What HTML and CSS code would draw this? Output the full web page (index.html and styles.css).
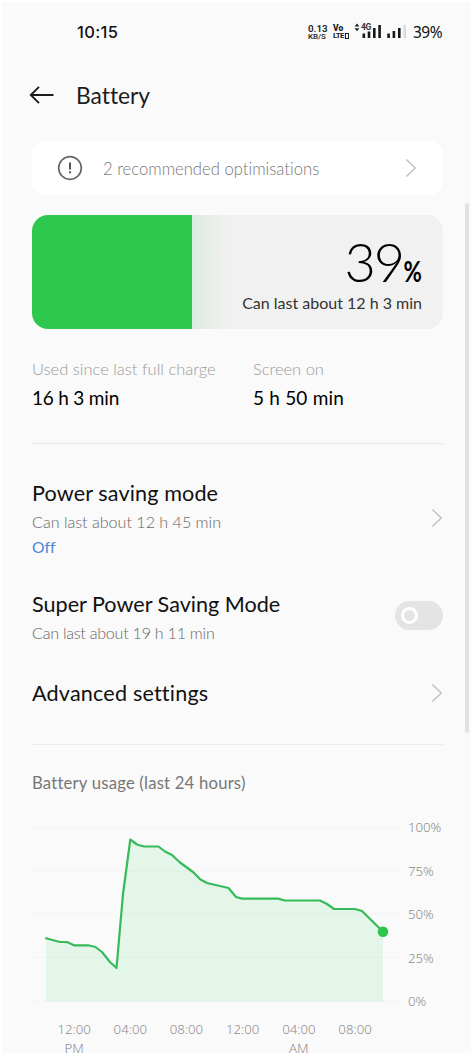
FILE: index.html
```html
<!DOCTYPE html>
<html lang="en">
<head>
<meta charset="utf-8">
<title>Battery</title>
<link rel="stylesheet" href="styles.css">
</head>
<body>
<div class="screen">
  <div class="status">
    <span class="clock">10:15</span>
    <div class="status-right">
      <span class="speed"><b>0.13</b><i>KB/S</i></span>
      <span class="volte"><b>Vo</b><i>LTE<em></em></i></span>
      <span class="net"><svg width="6" height="9" viewBox="0 0 6 9"><path d="M.6 3.600 3 .6 5.400 3.600zM.6 5.200 3 8.200 5.400 5.200z" fill="#222"/></svg>4G</span>
      <svg class="signals" width="46" height="20" viewBox="0 0 46 20">
        <path d="M.5 11.500h2.600v4.500H.5zM5.700 9.500h2.600v6.500H5.700zM11 6h2.600v10H11zM16.300 3h2.600v13h-2.600z" fill="#181818"/>
        <path d="M25.300 11.500h2.600v4.500h-2.600zM30.600 9h2.600v7h-2.600zM36 6h2.600v10H36z" fill="#181818"/>
        <path d="M41.500 3h2.500v13h-2.500z" fill="#d9d9d9"/>
      </svg>
      <span class="level">39%</span>
    </div>
  </div>

  <header class="header">
    <svg class="back" width="26" height="20" viewBox="0 0 26 20"><path d="M24.500 10H2M10 1.800 1.800 10 10 18.200" fill="none" stroke="#1c1c1c" stroke-width="1.900"/></svg>
    <h1 class="title">Battery</h1>
  </header>

  <main class="content">
    <div class="tip">
      <svg width="26" height="26" viewBox="0 0 26 26"><circle cx="13" cy="13" r="11.300" fill="none" stroke="#666" stroke-width="1.700"/><path d="M13 7.500v7M13 16.200v2" stroke="#444" stroke-width="1.800"/></svg>
      <span class="tip-text">2 recommended optimisations</span>
      <svg class="chev" width="12" height="20" viewBox="0 0 12 20"><path d="M1.300 1.500 10.300 10 1.300 18.500"/></svg>
    </div>

    <section class="gauge">
      <div class="gauge-fill"></div>
      <div class="gauge-fade"></div>
      <div class="gauge-text">
        <div class="big"><span class="num">39</span><span class="pct">%</span></div>
        <div class="remain">Can last about 12 h 3 min</div>
      </div>
    </section>

    <section class="stats">
      <div><div class="stat-label">Used since last full charge</div><div class="stat-value v1">16 h 3 min</div></div>
      <div><div class="stat-label">Screen on</div><div class="stat-value v2">5 h 50 min</div></div>
    </section>

    <section class="settings">
      <div class="row power">
        <div><div class="name n1">Power saving mode</div><div class="sub">Can last about 12 h 45 min</div><div class="off">Off</div></div>
        <svg class="chev" width="12" height="20" viewBox="0 0 12 20"><path d="M1.300 1.500 10.300 10 1.300 18.500"/></svg>
      </div>
      <div class="row super">
        <div><div class="name">Super Power Saving Mode</div><div class="sub s2">Can last about 19 h 11 min</div></div>
        <div class="toggle"><div class="knob"></div></div>
      </div>
      <div class="row advanced">
        <div class="name n3">Advanced settings</div>
        <svg class="chev" width="12" height="20" viewBox="0 0 12 20"><path d="M1.300 1.500 10.300 10 1.300 18.500"/></svg>
      </div>
    </section>

    <section class="usage">
      <h2 class="usage-title">Battery usage (last 24 hours)</h2>
      <div class="plot">
        <svg width="367" height="184" viewBox="32 823 367 184">
          <path d="M46 938.300 60 942H67L74 945.300H88L95.500 947 102 952 110 962 116.500 968 123 894 130.300 839.500 137 844.500 144 846.500H158.500L165 851.500 172 855 180 862.500 193 872 200.500 879.500 207 883 228.500 888 236 897 242 898.600H278L285 900.500H320L327 904 334 909H355L362 911 383 931.700V1001.500H46z" fill="#e4f5e9"/>
          <path d="M32 827.500H399M32 871H399M32 914H399M32 957.500H399M32 1001H399" stroke="#000" stroke-opacity=".025"/>
          <path d="M46 938.300 60 942H67L74 945.300H88L95.500 947 102 952 110 962 116.500 968 123 894 130.300 839.500 137 844.500 144 846.500H158.500L165 851.500 172 855 180 862.500 193 872 200.500 879.500 207 883 228.500 888 236 897 242 898.600H278L285 900.500H320L327 904 334 909H355L362 911 383 931.700" fill="none" stroke="#36bb59" stroke-width="2.200" stroke-linejoin="round" stroke-linecap="round"/>
          <circle cx="383" cy="931.700" r="5.300" fill="#2fc54d"/>
        </svg>
        <div class="y-axis"><span>100%</span><span>75%</span><span>50%</span><span>25%</span><span>0%</span></div>
      </div>
      <div class="x-axis"><span>12:00<br>PM</span><span>04:00</span><span>08:00</span><span>12:00</span><span>04:00<br>AM</span><span>08:00</span></div>
    </section>
  </main>
  <div class="scrollbar"></div>
</div>
</body>
</html>
```
FILE: styles.css
```css
* { box-sizing: border-box; }
body { margin: 0; background: #fff; font-family: Lato, "Noto Sans", sans-serif; color: #111; font-variant-ligatures: none; }
.screen { position: relative; width: 474px; height: 1053px; overflow: hidden; background: #fafafa; border: solid #fff; border-width: 2px 3px 0 2px; white-space: nowrap; }
.status { display: flex; justify-content: space-between; align-items: center; height: 60px; padding: 0 29px 0 75px; }
.clock { font: 500 16.500px/20px Inter, sans-serif; letter-spacing: .35px; }
.status-right { display: flex; align-items: center; }
.speed, .volte { display: flex; flex-direction: column; font: 700 9px/8px Roboto, sans-serif; color: #222; }
.speed { width: 25px; }
.speed b { font-size: 9.800px; line-height: 9px; font-weight: 600; }
.speed i { font-style: normal; font-weight: 500; font-size: 8px; line-height: 8px; letter-spacing: -.1px; }
.volte { width: 21px; font-size: 8.500px; }
.volte b { line-height: 8px; }
.volte i { display: flex; align-items: center; font-style: normal; font-size: 8px; line-height: 8px; letter-spacing: -.7px; }
.volte em { width: 4.500px; height: 6px; border: 1.500px solid #222; margin-left: 1px; }
.net { display: flex; align-items: center; width: 17px; height: 8px; margin: -10px -9px 0 0; font: 700 8.500px/8px Roboto, sans-serif; letter-spacing: -.3px; color: #333; }
.net svg { flex: none; margin-right: 1px; }
.level { font: 400 15.500px/20px "Noto Sans", sans-serif; width: 29px; margin-left: 5px; letter-spacing: -.5px; }
.header { display: flex; align-items: center; height: 66px; padding-left: 27px; gap: 21px; }
.title { margin: 0; font-weight: 400; font-size: 22.800px; line-height: 30px; color: #1c1c1c; }
.content { margin-left: 30px; width: 411px; }
.tip { display: flex; align-items: center; height: 54px; margin-top: 13px; padding: 0 26px 0 25px; background: #fff; border-radius: 14px; }
.tip-text { margin: 1px 0 0 20px; font-size: 16.650px; color: #777; flex: 1; font-weight: 300; }
.chev path { fill: none; stroke: #c4c4c4; stroke-width: 1.600; }
.gauge { display: flex; height: 114px; margin-top: 20px; background: #f1f1f1; border-radius: 16px; overflow: hidden; }
.gauge-fill { width: 160px; background: #2fc84e; }
.gauge-fade { width: 37px; background: linear-gradient(90deg, #dcebdf, #f1f1f1); }
.gauge-text { flex: 1; display: flex; flex-direction: column; align-items: flex-end; padding: 23px 21px 0 0; margin-left: -20px; }
.big { display: flex; align-items: baseline; height: 53px; line-height: 48px; color: #000; }
.num { font-weight: 300; font-size: 54px; letter-spacing: -2px; }
.pct { display: inline-block; font-weight: 700; font-size: 28px; transform: scaleX(.8); transform-origin: right; margin-left: -4px; }
.remain { font-size: 16px; line-height: 24px; color: #333; }
.stats { display: grid; grid-template-columns: 221px 1fr; height: 115px; padding-top: 28px; border-bottom: 1px solid #e6e6e6; }
.stat-label { font-size: 16.500px; line-height: 24px; color: #999; font-weight: 300; }
.stat-value { margin-top: 5px; font-size: 19px; line-height: 24px; color: #000; }
.v1 { letter-spacing: -.2px; }
.v2 { letter-spacing: .2px; }
.settings { height: 301px; padding-top: 34px; border-bottom: 1px solid #ececec; }
.row { display: flex; align-items: center; justify-content: space-between; }
.power { height: 82px; margin-top: -1px; }
.super { height: 58px; margin-top: 30px; }
.advanced { height: 36px; margin-top: 28px; }
.name { font-size: 21.600px; line-height: 30px; color: #111; }
.n1 { letter-spacing: .12px; }
.n3 { letter-spacing: .18px; }
.sub { font-size: 16.100px; line-height: 28px; color: #666; font-weight: 300; }
.s2 { letter-spacing: -.25px; }
.off { font-size: 15.600px; line-height: 22px; color: #4d85d6; }
.toggle { width: 48px; height: 29px; padding: 6px; border-radius: 15px; background: #e4e4e4; margin-top: -5px; }
.knob { width: 17px; height: 17px; border: 3.500px solid #fff; border-radius: 50%; }
.usage-title { margin: 26px 0 0; font-size: 16.700px; letter-spacing: .2px; font-weight: 400; line-height: 24px; color: #777; }
.plot { display: flex; margin-top: 28px; gap: 9px; }
.y-axis { display: flex; flex-direction: column; justify-content: space-between; height: 193px; margin-top: -5px; }
.y-axis span, .x-axis { font: 300 13.200px/19px "Noto Sans", sans-serif; color: #8c8c8c; }
.x-axis { display: grid; grid-template-columns: repeat(6, 56.200px); margin: 9px 0 0 14px; text-align: center; }
.scrollbar { position: absolute; left: 463px; top: 201px; width: 4px; height: 530px; border-radius: 2px; background: #e1e1e1; }
```
